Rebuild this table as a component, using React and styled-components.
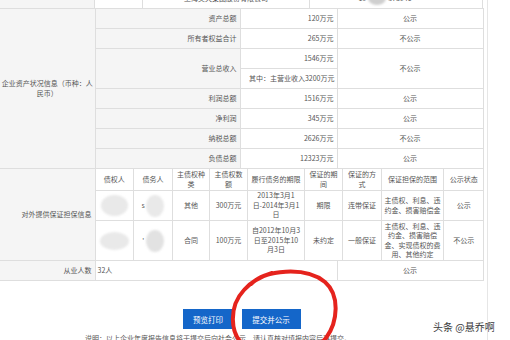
import React from 'react';
import styled, { createGlobalStyle } from 'styled-components';

const GlobalStyle = createGlobalStyle`
  html, body {
    margin: 0;
    padding: 0;
    background: #fff;
  }
  body {
    font-family: "Noto Sans CJK SC", "Noto Sans", sans-serif;
    overflow: hidden;
  }
`;

const Page = styled.div`
  position: relative;
  width: 510px;
  height: 340px;
  overflow: hidden;
`;

const Sheet = styled.div`
  width: 487px;
  min-height: 340px;
  border-right: 1px solid #e6e6e6;
`;

const TopRow = styled.div`
  display: grid;
  grid-template-columns: 95px 48px 167px 173px;
  width: 483px;
  height: 20px;
  margin-top: -12px;
  font-size: 7px;
  color: #555;
`;

const TopCell = styled.div`
  box-sizing: border-box;
  border-right: 1px solid #dedede;
  background: ${(p) => (p.$gray ? '#f5f5f5' : '#fff')};
  display: flex;
  align-items: center;
  justify-content: center;
  padding-right: ${(p) => p.$pr || 0}px;
  gap: 2px;
`;

const Table = styled.table`
  width: 483px;
  table-layout: fixed;
  border-collapse: collapse;
  border-left: hidden;
  font-size: 7px;
  color: #555;
`;

const Inner = styled.table`
  width: 100%;
  table-layout: fixed;
  border-collapse: collapse;
  border-style: hidden;
  font-size: 7px;
  color: #555;
`;

const Cell = styled.td`
  border: 1px solid #dedede;
  padding: 0 ${(p) => (p.$pad === undefined ? 3 : p.$pad)}px;
  height: ${(p) => p.$h || 19}px;
  text-align: ${(p) => p.$align || 'right'};
  background: ${(p) => (p.$gray ? '#f5f5f5' : '#fff')};
  line-height: 9.5px;
  vertical-align: middle;
  white-space: nowrap;
`;

const Blob = styled.span`
  display: inline-block;
  vertical-align: middle;
  width: ${(p) => p.$w}px;
  height: ${(p) => p.$h}px;
  border-radius: 50%;
  background: ${(p) => p.$c || '#e9e9e9'};
  filter: blur(1px);
`;

const Actions = styled.div`
  width: 483px;
  display: flex;
  justify-content: center;
  gap: 8px;
  margin-top: 28px;
`;

const Button = styled.button`
  height: 20px;
  width: ${(p) => p.$w}px;
  border: none;
  padding: 0;
  background: #1466c9;
  color: #fff;
  font-family: "Noto Sans CJK SC", sans-serif;
  font-size: 7.5px;
`;

const Note = styled.div`
  margin-top: 4px;
  padding-left: 85px;
  font-size: 7px;
  color: #555;
  white-space: nowrap;
`;

const Watermark = styled.div`
  position: absolute;
  left: 433px;
  top: 319px;
  font-size: 10px;
  color: #3a3a3a;
  text-shadow: 0 0 2px #fff, 0 0 2px #fff;
`;

const Circle = styled.svg`
  position: absolute;
  left: 225px;
  top: 262px;
`;

const assets = [
  ['资产总额', '120万元', '公示'],
  ['所有者权益合计', '265万元', '不公示'],
];
const assetsTail = [
  ['利润总额', '1516万元', '公示'],
  ['净利润', '345万元', '公示'],
  ['纳税总额', '2626万元', '不公示'],
  ['负债总额', '12323万元', '公示'],
];

const innerCols = [38, 39, 37, 38, 57, 38, 39, 62, 40];
const innerHead = ['债权人', '债务人', ['主债权种', '类'], ['主债权数', '额'], '履行债务的期限', ['保证的期', '间'], ['保证的方', '式'], '保证担保的范围', '公示状态'];

const lines = (arr) => arr.map((t, i) => (
  <React.Fragment key={i}>{i > 0 && <br />}{t}</React.Fragment>
));

export default function App() {
  return (
    <Page>
      <GlobalStyle />
      <Sheet>
        <TopRow>
          <TopCell $gray />
          <TopCell />
          <TopCell>上海美天集团股份有限公司</TopCell>
          <TopCell $pr={22}>
            <span>10</span>
            <Blob $w={18} $h={14} $c="#cfcfcf" />
            <span>578946</span>
          </TopCell>
        </TopRow>
        <Table>
          <colgroup>
            <col style={{ width: 95 }} />
            <col style={{ width: 145 }} />
            <col style={{ width: 97 }} />
            <col style={{ width: 146 }} />
          </colgroup>
          <tbody>
            {assets.map(([k, v, s], i) => (
              <tr key={k}>
                {i === 0 && (
                  <Cell rowSpan={8} $gray $align="center" $pad={1}>
                    企业资产状况信息（币种：人<br />民币）
                  </Cell>
                )}
                <Cell $gray>{k}</Cell>
                <Cell>{v}</Cell>
                <Cell $align="center">{s}</Cell>
              </tr>
            ))}
            <tr>
              <Cell rowSpan={2} $gray>营业总收入</Cell>
              <Cell>1546万元</Cell>
              <Cell rowSpan={2} $align="center">不公示</Cell>
            </tr>
            <tr>
              <Cell $pad={2}>其中：主营业收入3200万元</Cell>
            </tr>
            {assetsTail.map(([k, v, s]) => (
              <tr key={k}>
                <Cell $gray>{k}</Cell>
                <Cell>{v}</Cell>
                <Cell $align="center">{s}</Cell>
              </tr>
            ))}
            <tr>
              <Cell $gray>对外提供保证担保信息</Cell>
              <Cell colSpan={3} $pad={0}>
                <Inner>
                  <colgroup>
                    {innerCols.map((w, i) => <col key={i} style={{ width: w }} />)}
                  </colgroup>
                  <tbody>
                    <tr>
                      {innerHead.map((h, i) => (
                        <Cell key={i} $h={21} $align="center" $pad={1}>
                          {Array.isArray(h) ? lines(h) : h}
                        </Cell>
                      ))}
                    </tr>
                    <tr>
                      <Cell $h={29} $align="center" $pad={0}>
                        <Blob $w={27} $h={21} />
                      </Cell>
                      <Cell $h={29} $align="center" $pad={0}>
                        <span>s</span> <Blob $w={18} $h={22} />
                      </Cell>
                      <Cell $h={29} $align="center">其他</Cell>
                      <Cell $h={29} $align="center" $pad={0}>300万元</Cell>
                      <Cell $h={29} $align="center" $pad={0}>
                        {lines(['2013年3月1', '日-2014年3月1', '日'])}
                      </Cell>
                      <Cell $h={29} $align="center">期限</Cell>
                      <Cell $h={29} $align="center">连带保证</Cell>
                      <Cell $h={29} $align="center" $pad={0}>
                        {lines(['主债权、利息、违', '约金、损害赔偿金'])}
                      </Cell>
                      <Cell $h={29} $align="center">公示</Cell>
                    </tr>
                    <tr>
                      <Cell $h={39} $align="center" $pad={0}>
                        <Blob $w={29} $h={18} />
                      </Cell>
                      <Cell $h={39} $align="center" $pad={0}>
                        <span>'</span> <Blob $w={18} $h={22} $c="#e2e2e2" />
                      </Cell>
                      <Cell $h={39} $align="center">合同</Cell>
                      <Cell $h={39} $align="center" $pad={0}>100万元</Cell>
                      <Cell $h={39} $align="center" $pad={0}>
                        {lines(['自2012年10月3', '日至2015年10', '月3日'])}
                      </Cell>
                      <Cell $h={39} $align="center">未约定</Cell>
                      <Cell $h={39} $align="center">一般保证</Cell>
                      <Cell $h={39} $align="center" $pad={0}>
                        {lines(['主债权、利息、违', '约金、损害赔偿', '金、实现债权的费', '用、其他约定'])}
                      </Cell>
                      <Cell $h={39} $align="center">不公示</Cell>
                    </tr>
                  </tbody>
                </Inner>
              </Cell>
            </tr>
            <tr>
              <Cell $gray>从业人数</Cell>
              <Cell colSpan={2} $align="left" $pad={2}>32人</Cell>
              <Cell $align="center">公示</Cell>
            </tr>
          </tbody>
        </Table>
        <Actions>
          <Button $w={51}>预览打印</Button>
          <Button $w={59}>提交并公示</Button>
        </Actions>
        <Note>说明：以上企业年度报告信息将于提交后向社会公示，请认真核对填报内容后再提交。</Note>
      </Sheet>
      <Watermark>头条 @悬乔啊</Watermark>
      <Circle width="130" height="100" viewBox="0 0 130 100">
        <path
          d="M 26 22 C 40 8, 80 4, 100 20 C 115 33, 113 60, 101 76 C 86 94, 40 98, 20 84 C 4 72, 4 44, 19 28 C 27 19, 37 14, 47 11"
          fill="none"
          stroke="#e5231d"
          strokeWidth="4"
          strokeLinecap="round"
        />
      </Circle>
    </Page>
  );
}
